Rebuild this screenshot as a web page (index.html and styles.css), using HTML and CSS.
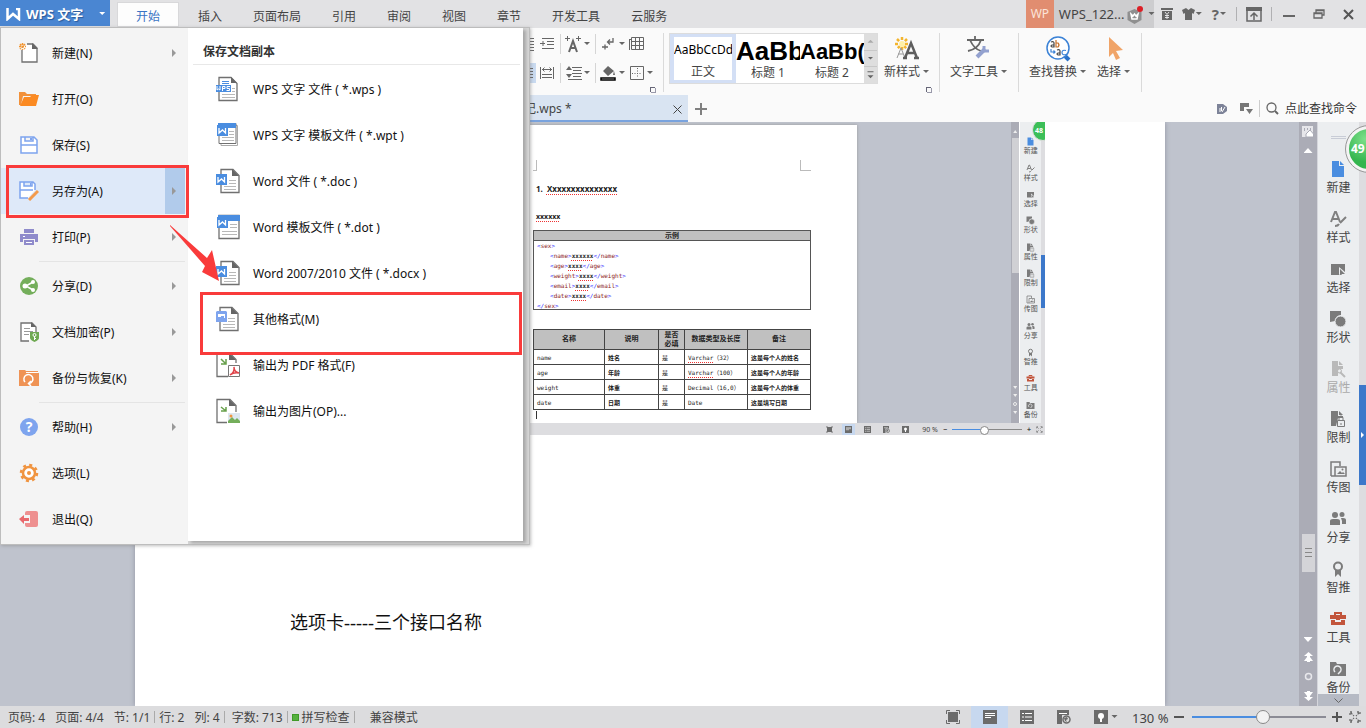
FILE: index.html
```html
<!DOCTYPE html>
<html lang="zh-CN">
<head>
<meta charset="utf-8">
<title>WPS 文字</title>
<link rel="stylesheet" href="styles.css">
</head>
<body>
<svg class="defs" aria-hidden="true">
  <symbol id="page-new" viewBox="0 0 18 18"><path fill="#4a8de0" d="M3 1h7v5h5v11H3z"/><path fill="#4a8de0" d="M11 1l4 4h-4z"/></symbol>
  <symbol id="style" viewBox="0 0 18 18"><path fill="none" stroke="#808080" stroke-width="2" d="M2 12L6 2h1l4 10M4 9h5"/><path fill="none" stroke="#808080" stroke-width="2" d="M17 7l-6 6M6 16q3 0 4-2"/></symbol>
  <symbol id="select" viewBox="0 0 18 18"><path fill="#7b7b7b" d="M2 4h14v11H2z"/><path fill="#eceef0" d="M10 7v8l2-1 1 1h3v-3z"/><path fill="#7b7b7b" d="M11 9l5 5h-3l-2 1z"/></symbol>
  <symbol id="shape" viewBox="0 0 18 18"><path fill="#7b7b7b" d="M1 1h11v4a6 6 0 0 0-6 6l-5 1z"/><circle cx="11.500" cy="11.500" r="5.500" fill="#7b7b7b" stroke="#eceef0"/></symbol>
  <symbol id="prop" viewBox="0 0 18 18"><path fill="#b9b9b9" d="M3 1h6v5h5v3H9v7H3z"/><path fill="#b9b9b9" d="M10 1l4 4h-4z"/><path fill="none" stroke="#b9b9b9" stroke-width="2" d="M11 12l5 5"/><circle cx="10.500" cy="11" r="2" fill="none" stroke="#b9b9b9"/></symbol>
  <symbol id="limit" viewBox="0 0 18 18"><path fill="#7b7b7b" d="M2 1h7v5h5v2H9l-2 8H2z"/><path fill="#7b7b7b" d="M10 1l4 4h-4z"/><path fill="#eceef0" stroke="#7b7b7b" d="M8.500 10.500h7v6h-7z"/><path fill="none" stroke="#7b7b7b" d="M10 10V8q0-2 2-2t2 2v2M12 13v2"/></symbol>
  <symbol id="upload" viewBox="0 0 18 18"><path fill="none" stroke="#7b7b7b" stroke-width="1.500" d="M2 16V2h9v4M2 16h4M6 7h11v9H6z"/><path fill="#7b7b7b" d="M8 14l3-3 2 2 1-1 2 2z"/><circle cx="13.500" cy="9.500" r="1" fill="#7b7b7b"/></symbol>
  <symbol id="share" viewBox="0 0 18 18"><g fill="#7b7b7b"><circle cx="6" cy="5" r="3"/><circle cx="13" cy="4.500" r="2.500"/><path d="M1 15V11q0-2 3-2h4q3 0 3 2v4zM12 8h2q3 0 3 2v4h-4v-3z"/></g></symbol>
  <symbol id="medal" viewBox="0 0 18 18"><circle cx="9" cy="6.500" r="4" fill="none" stroke="#7b7b7b" stroke-width="2"/><path fill="#7b7b7b" d="M6 10h6v7l-3-3-3 3z"/></symbol>
  <symbol id="tools" viewBox="0 0 18 18"><path fill="none" stroke="#c2553c" stroke-width="2" d="M6 5V3h6v2"/><path fill="#c2553c" d="M1 5h16v4h-6v1H7V9H1zM2 10h4v2h6v-2h4v5H2z"/></symbol>
  <symbol id="backup" viewBox="0 0 18 18"><path fill="#7b7b7b" d="M1 2h6l1 2h9v12H1z"/><path fill="none" stroke="#eceef0" stroke-width="1.500" d="M6 12a3.500 3.500 0 1 1 5 0l-2 2"/></symbol>
  <symbol id="wbox" viewBox="0 0 12 12"><path fill="#4a8de0" d="M0 0h11v11H0z"/><path fill="none" stroke="#fff" stroke-width="1.300" d="M2 3v5l3.500-3 3 3V3"/></symbol>
  <symbol id="doc" viewBox="0 0 24 26"><path fill="#fff" stroke="#707070" stroke-width="1.300" d="M5 1.500h12l6 6v17H5z"/><path fill="#666" d="M16 1l7 7h-7z"/><path stroke="#b8b8b8" d="M13 12.500h7M13 15.500h7M8 18.500h12M8 21.500h12"/></symbol>
  <symbol id="view-page" viewBox="0 0 14 14"><path fill="#6b6b6b" d="M0 0h14v14H0z"/><path stroke="#fff" d="M2 3.500h10M2 5.500h10M2 7.500h6"/></symbol>
  <symbol id="view-list" viewBox="0 0 14 14"><path fill="#6b6b6b" d="M0 0h14v14H0z"/><path stroke="#fff" d="M2 3.500h2M5 3.500h7M2 7h2M5 7h7M2 10.500h2M5 10.500h7"/></symbol>
  <symbol id="view-web" viewBox="0 0 14 14"><path fill="#6b6b6b" d="M0 0h12v5H5v9H0z"/><path stroke="#fff" d="M2 3.500h8"/><circle cx="9.500" cy="9.500" r="3.500" fill="#ddd" stroke="#6b6b6b" stroke-width="1.500"/><path fill="#6b6b6b" d="M7 8l3-1 1 2-2 1 1 2-2-1z"/></symbol>
  <symbol id="view-full" viewBox="0 0 14 14"><path fill="#6b6b6b" d="M2 2h10v10H2z"/><path fill="none" stroke="#6b6b6b" d="M.5 4V.5H4M10 .5h3.500V4M.5 10v3.500H4M10 13.500h3.500V10"/></symbol>
  <symbol id="view-bulb" viewBox="0 0 14 14"><path fill="#6b6b6b" d="M0 0h14v14H0z"/><circle cx="7" cy="6" r="3" fill="#fff"/><path fill="#fff" d="M6 8h2v4H6z"/></symbol>
  <symbol id="expand" viewBox="0 0 12 12"><path fill="none" stroke="#6b6b6b" stroke-width="1.300" stroke-dasharray="2 1" d="M1 4V1h3M8 1h3v3M1 8v3h3M8 11h3V8M2 2l3 3M10 2L7 5M2 10l3-3M10 10L7 7"/></symbol>
</svg>

<header class="titlebar">
  <button class="app"><svg width="15" height="13" viewBox="0 0 15 13"><path fill="none" stroke="#fff" stroke-width="2.500" d="M1.500 0v11L7 6l6 5V1H10"/></svg><span>WPS 文字</span><i class="caret light"></i></button>
  <nav class="tabs">
    <button class="tab on">开始</button><button class="tab">插入</button><button class="tab">页面布局</button><button class="tab">引用</button><button class="tab">审阅</button><button class="tab">视图</button><button class="tab">章节</button><button class="tab">开发工具</button><button class="tab">云服务</button>
  </nav>
  <div class="account">
    <span class="wp">WP</span>
    <button class="user">WPS_122...
      <svg width="17" height="19" viewBox="0 0 17 19"><path fill="#8f8f8f" d="M7.500 4l7 3v8l-7 4-7-4V7z"/><path fill="none" stroke="#fff" stroke-width="1.500" d="M4 9l2 2 1.500-2L9 11l2-2-1 5H5z"/><circle cx="13" cy="4" r="3" fill="#dc1f26"/></svg>
      <i class="caret"></i></button>
  </div>
  <div class="winctl">
    <button aria-label="稻壳"><svg width="12" height="12" viewBox="0 0 12 12"><path fill="#666" d="M0 0h12v2H0zM1 3h10v9H1z"/><path fill="none" stroke="#e3e3e5" d="M4 4l2 2.500L8 4M4 7.500h4M4 9.500h4M6 7v4"/></svg></button>
    <button aria-label="皮肤" class="with-caret"><svg width="13" height="12" viewBox="0 0 13 12"><path fill="#666" d="M4 0l2.500 2L9 0l4 2-1.500 4-1.500-1v7H3V5L1.500 6 0 2z"/></svg><i class="caret"></i></button>
    <button aria-label="帮助" class="with-caret help">?<i class="caret"></i></button>
    <i class="bar"></i>
    <button aria-label="收起功能区"><svg width="16" height="15" viewBox="0 0 16 15"><path fill="none" stroke="#666" stroke-width="1.500" d="M1 1h14v13H1z"/><path fill="#666" d="M0 0h16v4H0z"/><path fill="none" stroke="#666" stroke-width="1.500" d="M8 13V6M4.500 9.500L8 6l3.500 3.500"/></svg></button>
    <i class="bar"></i>
    <button aria-label="最小化" class="wide"><svg width="12" height="12" viewBox="0 0 12 12"><path fill="#666" d="M0 7h12v2H0z"/></svg></button>
    <button aria-label="还原" class="wide"><svg width="12" height="10" viewBox="0 0 12 10"><path fill="none" stroke="#666" stroke-width="1.300" d="M3 4V1h8v5H9M1 4h8v5H1zM3 1.500h8M1 4.500h8"/></svg></button>
    <button aria-label="关闭" class="wide"><svg width="11" height="11" viewBox="0 0 11 11"><path stroke="#555" stroke-width="2" d="M1 1l9 9M10 1l-9 9"/></svg></button>
  </div>
</header>

<section class="ribbon">
  <div class="para">
    <div class="tools">
      <button class="ic half" aria-label="减少缩进"><svg width="12" height="16" viewBox="0 0 12 16"><path stroke="#666" d="M0 2.500h10M0 5.500h10M0 8.500h10M0 11.500h10M0 14.500h10"/></svg></button>
      <button class="ic" aria-label="增加缩进"><svg width="16" height="16" viewBox="0 0 16 16"><path stroke="#666" d="M3 2.500h12M8 5.500h7M8 8.500h7M3 12.500h12M1 7.500h5M4 5v5"/></svg></button>
      <i class="sep"></i>
      <button class="ic" aria-label="文字效果"><svg width="18" height="18" viewBox="0 0 18 18"><path fill="none" stroke="#666" stroke-width="2" d="M4 17l4-11 4 11M5.500 13h5"/><path fill="none" stroke="#666" d="M0 3.500h5M2.500 1v5M11 3.500h5M13.500 1v5"/></svg></button><i class="caret"></i>
      <i class="sep"></i>
      <button class="ic" aria-label="换行"><svg width="16" height="16" viewBox="0 0 16 16"><path fill="none" stroke="#666" stroke-width="1.300" d="M12 2v4H7M9 3.500L6.500 6 9 8.500M1 11h6M4 8.500v5"/></svg></button><i class="caret"></i>
      <button class="ic push" aria-label="表格"><svg width="16" height="16" viewBox="0 0 16 16"><path fill="none" stroke="#666" d="M2.500 1.500h12v12h-12zM2 5.500h13M2 9.500h13M6.500 1v13M10.500 1v13M0 3.500h2M.5 4v10"/></svg></button>
    </div>
    <div class="tools">
      <button class="ic half on" aria-label="两端对齐"><svg width="12" height="16" viewBox="0 0 12 16"><path stroke="#666" d="M0 3.500h9M0 6.500h9M0 9.500h9M0 12.500h9"/></svg></button>
      <button class="ic" aria-label="分散对齐"><svg width="16" height="16" viewBox="0 0 16 16"><path fill="none" stroke="#666" d="M1.500 2v12M14.500 2v12M3 4.500h10M5.500 2.500l-2 2 2 2M10.500 2.500l2 2-2 2M3 9.500h10M3 12.500h10"/></svg></button>
      <i class="sep"></i>
      <button class="ic" aria-label="行距"><svg width="16" height="16" viewBox="0 0 16 16"><path stroke="#666" d="M6 2.500h10M7 5.500h8M6 8.500h10M7 11.500h8M2 14.500h14"/><path fill="#666" d="M3 1l3 4H0zM3 13l3-4H0z"/></svg></button><i class="caret"></i>
      <i class="sep"></i>
      <button class="ic" aria-label="底纹"><svg width="18" height="18" viewBox="0 0 18 18"><path fill="#666" d="M3 7l5-5 6 5-6 5zM14 7l1 4-2 0z"/><path fill="#fff" stroke="#000" stroke-width="1.500" d="M1 14h14v2H1z"/></svg></button><i class="caret"></i>
      <button class="ic push" aria-label="边框"><svg width="14" height="14" viewBox="0 0 14 14"><path fill="none" stroke="#666" d="M.5.500h13v13H.5z"/><path fill="none" stroke="#666" stroke-dasharray="1 1.500" d="M7.500 2v10M2 7.500h10"/></svg></button><i class="caret"></i>
    </div>
    <button class="launch" aria-label="段落设置"></button>
  </div>
  <div class="stylegroup">
    <div class="gallery">
      <button class="st on"><b class="s0">AaBbCcDd</b><span>正文</span></button>
      <button class="st"><b class="s1">AaBb</b><span>标题 1</span></button>
      <button class="st"><b class="s2">AaBb(</b><span>标题 2</span></button>
      <div class="gscroll"><button aria-label="上一行"><i class="caret up"></i></button><button aria-label="下一行"><i class="caret"></i></button><button aria-label="更多"><i class="caret more"></i></button></div>
    </div>
    <button class="big"><svg width="26" height="26" viewBox="0 0 26 26"><path stroke="#f3b52e" stroke-width="2.500" stroke-dasharray="3 2" d="M8 1v13M1 8h14M3 3l10 10M13 3L3 13"/><circle cx="8" cy="8" r="3" fill="#fff0a8"/><path fill="none" stroke="#999" d="M3 22l4-10 4 10M4 18h5"/><path fill="none" stroke="#5e5e5e" stroke-width="2.500" d="M11 22l6-15 6 15M13 17h8M9 22h4M20 22h5"/></svg><span>新样式<i class="caret"></i></span></button>
    <button class="launch" aria-label="样式设置"></button>
  </div>
  <div class="grp"><button class="big"><svg width="26" height="26" viewBox="0 0 26 26"><path fill="none" stroke="#666" stroke-width="1.800" d="M1 4h17M9 0v3M4 4q4 9 11 11M15 4q-3 9-13 11"/><path stroke="#93a1cf" stroke-width="4" d="M11 21l8-8"/><path fill="none" stroke="#93a1cf" stroke-width="3" d="M18 10v5h5"/></svg><span>文字工具<i class="caret"></i></span></button></div>
  <div class="grp"><button class="big"><svg width="26" height="26" viewBox="0 0 26 26"><path stroke="#2b72c8" stroke-width="4" d="M20 20l4 4"/><circle cx="13" cy="12" r="11" fill="#fff" stroke="#3b82d6" stroke-width="1.500"/><path fill="none" stroke="#444" stroke-width="1.200" d="M6 6q3-1 3 1v4H7q-2-1 0-2h2M12 14q3-1 3 1v4h-2q-2-1 0-2h2"/><path fill="none" stroke="#c8702a" stroke-width="1.200" d="M11 4v7h2q2-2 0-4h-2"/><path fill="none" stroke="#3b82d6" stroke-width="1.200" d="M21 14.500q-4-1-4 2t4 2M6 13v3h4M8.500 14.500L10 16l-1.500 1.500"/></svg><span>查找替换<i class="caret"></i></span></button>
  <button class="big"><svg width="26" height="26" viewBox="0 0 26 26"><path fill="#f0a468" d="M8 1l14 13-7 1 4 7-4 2-3-7-4 4z"/></svg><span>选择<i class="caret"></i></span></button></div>
</section>

<div class="doctabs">
  <div class="doctab"><span>笔记.wps *</span><button aria-label="关闭标签"><svg width="9" height="9" viewBox="0 0 9 9"><path stroke="#444" d="M.5.500l8 8M8.500.500l-8 8"/></svg></button></div>
  <button class="plus" aria-label="新建标签"><svg width="12" height="12" viewBox="0 0 12 12"><path stroke="#808080" stroke-width="2" d="M6 0v12M0 6h12"/></svg></button>
  <div class="cmd">
    <svg width="10" height="10" viewBox="0 0 10 10"><path fill="#7d8398" d="M0 0h6l4 3v4l-4 3H0z"/><path stroke="#fff" d="M3 8V4M5 8l3-5M4.500 7V3"/></svg>
    <svg width="13" height="11" viewBox="0 0 13 11"><path fill="#777" d="M0 0h9v4H4v4H0zM6 6h7l-3.500 5z"/></svg>
    <i></i>
    <svg width="13" height="13" viewBox="0 0 13 13"><circle cx="5.500" cy="5.500" r="4.500" fill="none" stroke="#666" stroke-width="1.300"/><path stroke="#666" stroke-width="2" d="M9 9l3 3"/></svg>
    <a href="#">点此查找命令</a>
  </div>
</div>

<main class="work">
  <div class="canvas">
    <article class="paper">
      <div class="shot">
        <div class="shot-body">
          <div class="shot-canvas">
            <div class="shot-page">
              <div class="corners"><i></i><i></i></div>
              <h3>1.&nbsp;&nbsp;<u>Xxxxxxxxxxxxxxx</u></h3>
              <h4><u>xxxxxx</u></h4>
              <div class="example">
                <div class="ex-head">示例</div>
                <div class="code"><p>&lt;<s>sex</s>&gt;</p><p class="in">&lt;<s>name</s>&gt;<u>xxxxxx</u>&lt;/<s>name</s>&gt;</p><p class="in">&lt;<s>age</s>&gt;<u>xxxx</u>&lt;/<s>age</s>&gt;</p><p class="in">&lt;<s>weight</s>&gt;<u>xxxx</u>&lt;/<s>weight</s>&gt;</p><p class="in">&lt;<s>email</s>&gt;<u>xxxx</u>&lt;/<s>email</s>&gt;</p><p class="in">&lt;<s>date</s>&gt;<u>xxxx</u>&lt;/<s>date</s>&gt;</p><p>&lt;/<s>sex</s>&gt;</p></div>
              </div>
              <table>
                <colgroup><col class="c1"><col class="c2"><col class="c3"><col class="c4"><col class="c4"></colgroup>
                <tr><th>名称</th><th>说明</th><th>是否<br>必填</th><th>数据类型及长度</th><th>备注</th></tr>
                <tr><td>name</td><td class="b">姓名</td><td>是</td><td><u>Varchar</u>（32）</td><td class="b">这是每个人的姓名</td></tr>
                <tr><td>age</td><td class="b">年龄</td><td>是</td><td><u>Varchar</u>（100）</td><td class="b">这是每个人的年龄</td></tr>
                <tr><td>weight</td><td class="b">体重</td><td>是</td><td>Decimal（16,0）</td><td class="b">这是每个人的体重</td></tr>
                <tr><td>date</td><td class="b">日期</td><td>是</td><td>Date</td><td class="b">这是填写日期</td></tr>
              </table>
              <i class="cursor"></i>
            </div>
          </div>
          <div class="mini-scroll"><i class="tri up"></i><i class="mthumb"></i><i class="tri"></i><i class="tri"></i><i class="dot"></i><i class="tri"></i></div>
          <div class="mini-side">
            <div class="mi"><svg><use href="#page-new"/></svg>新建</div><div class="mi"><svg><use href="#style"/></svg>样式</div><div class="mi"><svg><use href="#select"/></svg>选择</div><div class="mi"><svg><use href="#shape"/></svg>形状</div><div class="mi"><svg><use href="#limit"/></svg>属性</div><div class="mi"><svg><use href="#limit"/></svg>限制</div><div class="mi"><svg><use href="#upload"/></svg>传图</div><div class="mi"><svg><use href="#share"/></svg>分享</div><div class="mi"><svg><use href="#medal"/></svg>智推</div><div class="mi"><svg><use href="#tools"/></svg>工具</div><div class="mi"><svg><use href="#backup"/></svg>备份</div>
          </div>
          <div class="mini-edge"><i></i></div>
          <span class="mini-ball">48</span>
        </div>
        <div class="shot-status">
          <div class="mini-views"><svg><use href="#view-full"/></svg><span class="hl"><svg><use href="#view-page"/></svg></span><svg><use href="#view-list"/></svg><svg><use href="#view-web"/></svg><svg><use href="#view-bulb"/></svg></div>
          <span>90 %</span><b>−</b><span class="mini-range"></span><b>+</b><svg><use href="#expand"/></svg>
        </div>
      </div>
      <p class="textline">选项卡-----三个接口名称</p>
    </article>
  </div>
  <div class="vscroll">
    <svg width="12" height="12" viewBox="0 0 12 12"><path fill="#e6e6ea" d="M0 0h11v11H0z"/><path fill="#a9aab5" d="M2 2h1v3H2zM5 2h1v2H5zM8 2h1v2H8z"/><path fill="#fff" stroke="#a9aab5" d="M4 11V8l4-4 3.500 4v3z"/></svg>
    <i class="tri up"></i>
    <div class="track"><i class="before"></i><i class="thumb"></i><i class="after"></i></div>
    <i class="tri"></i>
    <svg width="9" height="10" viewBox="0 0 9 10"><path fill="#fff" d="M4.500 0L9 4H6v1l3 4H6v1H3V9H0l3-4V4H0z"/></svg>
    <svg width="9" height="9" viewBox="0 0 9 9"><circle cx="4.500" cy="4.500" r="3" fill="none" stroke="#e8e8ec" stroke-width="1.500"/></svg>
    <svg width="9" height="10" viewBox="0 0 9 10"><path fill="#fff" d="M4.500 10L9 6H6V5l3-4H6V0H3v1H0l3 4v1H0z"/></svg>
  </div>
  <aside class="side">
    <div class="side-list">
      <i class="grip"></i>
      <button><svg><use href="#page-new"/></svg>新建</button>
      <button><svg><use href="#style"/></svg>样式</button>
      <button><svg><use href="#select"/></svg>选择</button>
      <button><svg><use href="#shape"/></svg>形状</button>
      <button class="off"><svg><use href="#prop"/></svg>属性</button>
      <button><svg><use href="#limit"/></svg>限制</button>
      <button><svg><use href="#upload"/></svg>传图</button>
      <button><svg><use href="#share"/></svg>分享</button>
      <button><svg><use href="#medal"/></svg>智推</button>
      <button><svg><use href="#tools"/></svg>工具</button>
      <button><svg><use href="#backup"/></svg>备份</button>
    </div>
    <button class="side-more" aria-label="更多"><svg width="9" height="5" viewBox="0 0 9 5"><path fill="none" stroke="#666" d="M.5.500l4 4 4-4"/></svg></button>
  </aside>
  <div class="edge"><button aria-label="展开侧栏"></button></div>
  <span class="ball">49</span>
</main>

<footer class="status">
  <span>页码: 4</span><span class="g9">页面: 4/4</span><span class="g9">节: 1/1</span><i></i><span>行: 2</span><span class="g9">列: 4</span><i></i><span class="g9 near">字数: 713</span><i></i><em></em><span>拼写检查</span><i></i><span class="g14">兼容模式</span>
  <div class="views">
    <button aria-label="全屏显示"><svg><use href="#view-full"/></svg></button>
    <button aria-label="页面视图" class="on"><svg><use href="#view-page"/></svg></button>
    <button aria-label="大纲"><svg><use href="#view-list"/></svg></button>
    <button aria-label="Web 版式"><svg><use href="#view-web"/></svg></button>
    <button aria-label="护眼模式"><svg><use href="#view-bulb"/></svg><i class="caret"></i></button>
  </div>
  <label for="zoom">130 %</label>
  <button class="zb" aria-label="缩小"><svg width="10" height="10" viewBox="0 0 10 10"><path stroke="#555" stroke-width="2" d="M0 5h10"/></svg></button>
  <input type="range" id="zoom" min="0" max="100" value="53">
  <button class="zb" aria-label="放大"><svg width="10" height="10" viewBox="0 0 10 10"><path stroke="#555" stroke-width="2" d="M0 5h10M5 0v10"/></svg></button>
  <button class="zb fit" aria-label="适应窗口"><svg width="12" height="12"><use href="#expand"/></svg></button>
</footer>

<div class="menu">
  <div class="menu-main">
    <button class="mrow"><svg viewBox="0 0 20 20"><path fill="#fff" stroke="#707070" stroke-width="1.300" d="M3 7V19h15V5l-4-4H8"/><path fill="#666" d="M13 0l6 6h-6z"/><path stroke="#f2942f" stroke-width="1.500" stroke-dasharray="2 1" d="M3.500 0v7M0 3.500h7M1 1l5 5M6 1L1 6"/></svg><span>新建(N)</span><i></i></button>
    <button class="mrow"><svg viewBox="0 0 20 20"><path fill="#f2913a" d="M0 3h6l2 2h9v2H4L2 16H0z"/><path fill="#fb8a22" d="M5 8h6l2-2h7l-3 11H1z"/></svg><span>打开(O)</span></button>
    <button class="mrow"><svg viewBox="0 0 20 20"><path fill="#fff" stroke="#7ea4ee" stroke-width="1.500" d="M2 2h13l3 3v13H2zM2 10h16M6 2v4h8V2"/><path fill="#7ea4ee" d="M11 3h2v2h-2z"/></svg><span>保存(S)</span></button>
    <button class="mrow on"><svg viewBox="0 0 20 20"><path fill="#fff" stroke="#7ea4ee" stroke-width="1.500" d="M9 17H1V1h13l2 2v6M1 9h13M5 1v4h8V1"/><path fill="#7ea4ee" d="M11 2h1v3h-1z"/><path stroke="#f39a4c" stroke-width="3" d="M10 19l9-9"/></svg><span>另存为(A)</span><i></i></button>
    <button class="mrow"><svg viewBox="0 0 20 20"><path fill="#8f8bcb" d="M5 2h10v4H5zM1 7h18v8h-3v-3H4v3H1zM5 13h10v5H5z"/><path stroke="#fff" d="M7 15.500h6M4 9.500h2"/></svg><span>打印(P)</span><i></i></button>
    <hr>
    <button class="mrow"><svg viewBox="0 0 20 20"><circle cx="10" cy="10" r="9" fill="#74ae5b"/><path fill="none" stroke="#fff" stroke-width="1.500" d="M14 6l-7 4 7 4"/><g fill="#fff"><circle cx="14" cy="6" r="2"/><circle cx="6" cy="10" r="2.500"/><circle cx="14" cy="14" r="2"/></g></svg><span>分享(D)</span><i></i></button>
    <button class="mrow"><svg viewBox="0 0 20 20"><path fill="#fff" stroke="#707070" stroke-width="1.300" d="M10 19H2V1h11l4 4v5"/><path fill="#666" d="M12 0l5 5h-5z"/><path stroke="#999" d="M5 6.500h6M5 9.500h9M5 12.500h5"/><path fill="#6fa952" d="M11 10h9v6q0 2-4.500 4Q11 18 11 16z"/><circle cx="15.500" cy="13" r="1.500" fill="none" stroke="#fff"/><path stroke="#fff" d="M15.500 14v4M15 16.500h2"/></svg><span>文档加密(P)</span><i></i></button>
    <button class="mrow"><svg viewBox="0 0 20 20"><path fill="#ef9355" d="M0 2h6l1 1h12v2h1v13H0z"/><path fill="none" stroke="#fff" stroke-width="1.500" d="M6 14a4.500 4.500 0 1 1 4 1.500M12 13l-2.500 2.500L12 18"/><path stroke="#fff" d="M7 4.500h12"/></svg><span>备份与恢复(K)</span><i></i></button>
    <hr>
    <button class="mrow"><svg viewBox="0 0 20 20"><circle cx="10" cy="10" r="9" fill="#7ea4ee"/><text x="10" y="15" class="q">?</text></svg><span>帮助(H)</span><i></i></button>
    <button class="mrow"><svg viewBox="0 0 20 20"><circle cx="10" cy="10" r="8" fill="none" stroke="#f09440" stroke-width="2.500" stroke-dasharray="3 3.280"/><circle cx="10" cy="10" r="6" fill="#fff" stroke="#f09440" stroke-width="2.500"/><circle cx="10" cy="10" r="2" fill="#f09440"/></svg><span>选项(L)</span></button>
    <button class="mrow"><svg viewBox="0 0 20 20"><path fill="#ee9090" d="M6 4q0-2 2-2h9q2 0 2 2v12q0 2-2 2H8q-2 0-2-2v-2h5V6H6z"/><path fill="#e8686c" d="M0 10l5-4v3h5v3H5v3z"/></svg><span>退出(Q)</span></button>
  </div>
  <div class="menu-sub">
    <h2>保存文档副本</h2>
    <button class="srow"><svg viewBox="0 0 24 26"><path fill="#fff" stroke="#707070" stroke-width="1.300" d="M3 1.500h12l6 6v17H3z"/><path fill="#666" d="M15 1l6 6h-6z"/><path stroke="#4a8de0" d="M6 5.500h7M6 7.500h7"/><path fill="#4a8de0" d="M0 9h15v7H0z"/><path fill="none" stroke="#fff" d="M1 10v4l1.500-1L4 14v-4M6.500 15v-4.500H9v2H7M14 10.500h-3v2h2.500v2H10.500"/><path stroke="#b8b8b8" d="M16 12.500h3M16 15.500h3M6 18.500h13M6 21.500h13"/></svg><span>WPS 文字 文件 ( *.wps )</span></button>
    <button class="srow"><svg viewBox="0 0 24 26"><path fill="#fff" stroke="#aaa" d="M5 3.500h16.500v20H5z"/><path fill="#fff" stroke="#707070" d="M3 1.500h17v20H3z"/><path fill="#4a8de0" d="M2 1h18v5H2z"/><path stroke="#b8b8b8" d="M13 9.500h5M13 12.500h5M6 15.500h12M6 18.500h12"/><use href="#wbox" x="1" y="3" width="12" height="12"/></svg><span>WPS 文字 模板文件 ( *.wpt )</span></button>
    <button class="srow"><svg viewBox="0 0 24 26"><use href="#doc" width="24" height="26"/><use href="#wbox" x="0" y="6" width="12" height="12"/></svg><span>Word 文件 ( *.doc )</span></button>
    <button class="srow"><svg viewBox="0 0 24 26"><path fill="#fff" stroke="#707070" stroke-width="1.300" d="M3 1.500h20v23H3z"/><path fill="#4a8de0" d="M2 1h22v6H2z"/><path stroke="#b8b8b8" d="M14 10.500h7M14 13.500h7M6 17.500h15M6 20.500h15"/><use href="#wbox" x="1" y="3" width="12" height="12"/></svg><span>Word 模板文件 ( *.dot )</span></button>
    <button class="srow"><svg viewBox="0 0 24 26"><use href="#doc" width="24" height="26"/><use href="#wbox" x="0" y="6" width="12" height="12"/></svg><span>Word 2007/2010 文件 ( *.docx )</span></button>
    <button class="srow"><svg viewBox="0 0 24 26"><use href="#doc" x="-1" width="24" height="26"/><path fill="#7ea4ee" d="M1 5h9l1 1v10H0V6z"/><path fill="#fff" d="M2 8h7v4H8v-2H5v1H2z"/></svg><span>其他格式(M)</span></button>
    <button class="srow"><svg viewBox="0 0 24 26"><path fill="#fff" stroke="#707070" stroke-width="1.300" d="M12 24.500H1v-23h13l6 6V11"/><path fill="#666" d="M13 1l7 7h-7z"/><path fill="none" stroke="#68a04c" stroke-width="1.500" d="M5 7l5 5M10 7v5H5"/><path fill="#fff" stroke="#777" d="M12.500 13.500h11v11h-11z"/><path fill="none" stroke="#e0454b" stroke-width="1.500" d="M14 23q5-3 4-8 0 5 5 6-5-1-9 2"/></svg><span>输出为 PDF 格式(F)</span></button>
    <button class="srow"><svg viewBox="0 0 24 26"><path fill="#fff" stroke="#707070" stroke-width="1.300" d="M11 24.500H1v-23h13l6 6V14"/><path fill="#666" d="M13 1l7 7h-7z"/><path fill="none" stroke="#68a04c" stroke-width="1.500" d="M5 9l5 4M10 9v4H5"/><path fill="#dde7f1" d="M12 15h12v10H12z"/><path fill="#74ae5b" d="M12 25v-2l4-4 3 3 2-2 3 3v2z"/><circle cx="15" cy="18" r="1.500" fill="#f09440"/></svg><span>输出为图片(OP)...</span></button>
  </div>
  <i class="mark m1"></i><i class="mark m2"></i>
  <svg class="arrow" width="52" height="58" viewBox="0 0 52 58"><path fill="#f93b3b" d="M0 0L37 33l5-8 7 31-17-9 3-6L0 1z"/></svg>
</div>
</body>
</html>
```
FILE: styles.css
```css
* { box-sizing: border-box; }
body {
  margin: 0; height: 100vh; min-height: 600px; overflow: hidden; position: relative;
  display: flex; flex-direction: column;
  font: 12px/16px "Noto Sans", "Noto Sans CJK SC", sans-serif; color: #444; background: #fafafa;
}
button { border: 0; padding: 0; margin: 0; background: none; font: inherit; color: inherit; }
i, em { font-style: normal; }
h2, h3, h4, p { margin: 0; }
svg { display: block; flex: none; }
.defs { position: absolute; width: 0; height: 0; }
.caret { display: block; width: 8px; height: 4px; flex: none; background: #666; clip-path: polygon(1px 0, 7px 0, 4px 3px); }
.caret.light { background: #fff; }
.caret.up { background: #aaa; clip-path: polygon(4px 0, 7px 3px, 1px 3px); }
.caret.more { height: 8px; clip-path: polygon(1px 0, 7px 0, 7px 1px, 1px 1px, 1px 4px, 7px 4px, 4px 7px, 1px 4px, 1px 0); }

/* title bar */
.titlebar { height: 28px; flex: none; display: flex; background: #e2e2e4; }
.app { width: 110px; height: 26px; display: flex; align-items: center; gap: 5px; padding: 2px 0 0 6px; background: #4a86d2; color: #fff; font-size: 13px; font-weight: bold; white-space: nowrap; text-shadow: 1px 1px 1px #2a5a9a; }
.app .caret { margin-left: 10px; }
.tabs { display: flex; gap: 1px; padding: 3px 0 2px 8px; flex: 1; }
.tab { padding: 5px 15px 0; color: #444; white-space: nowrap; }
.tab.on { padding: 5px 18px 0; margin-right: 4px; background: #fdfdfd; color: #3a74c4; outline: 1px solid #d8d8da; }
.account { display: flex; }
.wp { width: 28px; line-height: 28px; text-align: center; background: #e18d70; color: #fbe4da; }
.user { width: 100px; display: flex; align-items: center; gap: 3px; padding-left: 5px; background: #cdcdcf; font-size: 13px; }
.winctl { display: flex; align-items: center; gap: 9px; padding: 0 10px 0 7px; }
.with-caret { display: flex; align-items: center; }
.help { font-size: 15px; font-weight: bold; color: #666; }
.bar { width: 1px; height: 14px; background: #b0b0b2; }
.winctl .wide { padding: 0 2px; }
.winctl .wide + .wide { margin-left: 5px; }

/* ribbon */
.ribbon { height: 67px; flex: none; display: flex; padding: 5px 0 3px 524px; background: #fafafa; }
.para { width: 140px; padding: 1px 0 3px; border-right: 1px solid #dadada; display: flex; flex-direction: column; gap: 9px; position: relative; }
.tools { display: flex; align-items: center; height: 20px; }
.tools .sep { width: 1px; height: 20px; margin: 0 4px; background: #d5d5d5; }
.ic { width: 18px; height: 20px; display: flex; align-items: center; justify-content: center; }
.ic.half { width: 12px; margin-right: 2px; }
.ic.on { background: #c9daf0; }
.ic.push { margin-left: 2px; }
.launch { position: absolute; right: 8px; bottom: 0; width: 5px; height: 5px; border: solid #667; border-width: 1px 0 0 1px; box-shadow: 1px 1px 0 #99a; }
.stylegroup { display: flex; padding: 0 9px 0 5px; border-right: 1px solid #dadada; position: relative; }
.gallery { display: flex; height: 51px; border: 1px solid #dcdcdc; background: #fff; }
.st { width: 64px; display: flex; flex-direction: column; align-items: center; overflow: hidden; white-space: nowrap; }
.st.on { width: 66px; border: 4px solid #d3dff5; border-width: 3px 4px; }
.st b { height: 31px; color: #000; line-height: 35px; align-self: flex-start; }
.st.on b { height: 28px; line-height: 26px; }
.st .s0 { font-weight: normal; }
.st .s1 { font-family: "Liberation Sans", sans-serif; font-size: 26px; }
.st .s2 { font-family: "Liberation Sans", sans-serif; font-size: 22px; }
.gscroll { width: 13px; display: flex; flex-direction: column; gap: 1px; background: #c8c8c8; }
.gscroll button { flex: 1; background: #dedede; display: flex; align-items: center; justify-content: center; }
.big { display: flex; flex-direction: column; align-items: center; gap: 2px; padding-top: 3px; white-space: nowrap; }
.big span { display: flex; align-items: center; gap: 2px; }
.stylegroup .big { margin-left: 6px; }
.grp { display: flex; gap: 10px; padding: 0 10px; border-right: 1px solid #dadada; }

/* document tabs */
.doctabs { height: 27px; flex: none; display: flex; align-items: center; }
.doctab { width: 553px; margin-left: 135px; align-self: stretch; display: flex; align-items: center; justify-content: space-between; padding: 3px 6px 0 377px; background: #d9e4f2; border-bottom: 2px solid #79a3de; }
.plus { padding: 0 7px; }
.cmd { margin-left: auto; display: flex; align-items: center; gap: 6px; padding-right: 9px; }
.cmd svg:nth-child(2) { margin-left: 7px; }
.cmd i { width: 1px; height: 17px; background: #ccc; }
.cmd a { color: #333; text-decoration: none; }

/* workspace */
.work { flex: 1; min-height: 0; display: flex; position: relative; overflow: hidden; }
.canvas { flex: 1; min-width: 0; overflow: hidden; padding: 0 134px 0 135px; background: #bfc3cd; }
.paper { min-height: 100%; padding: 0 120px 0 155px; background: #fff; box-shadow: 0 0 5px #8f93a0; }
.textline { margin-top: 176px; font: 18px/24px "Liberation Serif", "Noto Sans CJK SC", serif; color: #111; }
.vscroll { width: 19px; display: flex; flex-direction: column; align-items: center; gap: 10px; padding: 4px 0 5px; background: #abacb6; border-right: 1px solid #d5d6dc; }
.vscroll .tri { width: 9px; height: 5px; background: #fff; clip-path: polygon(0 0, 100% 0, 50% 100%); }
.vscroll .tri.up { clip-path: polygon(50% 0, 100% 100%, 0 100%); }
.track { flex: 1; display: flex; flex-direction: column; }
.track .before { flex: 375; }
.track .after { flex: 56; }
.thumb { width: 13px; height: 38px; background: linear-gradient(#888, #888) 50% 14px / 7px 1px no-repeat, linear-gradient(#888, #888) 50% 18px / 7px 1px no-repeat, linear-gradient(#888, #888) 50% 22px / 7px 1px no-repeat, #d4d4d8; }
.side { width: 41px; display: flex; flex-direction: column; background: #eceef0; }
.side-list { flex: 1; min-height: 0; overflow: hidden; display: flex; flex-direction: column; align-items: center; }
.grip { flex: none; width: 15px; height: 3px; margin: 14px 0 17px; border: solid #c8ccd6; border-width: 1px 0; }
.side-list button { flex: none; height: 50px; padding-top: 4px; display: flex; flex-direction: column; align-items: center; gap: 1px; line-height: 18px; }
.side-list svg { width: 18px; height: 18px; }
.side-list .off { color: #aaa; }
.side-more { height: 12px; display: flex; align-items: center; justify-content: center; background: #b6bac4; }
.edge { width: 7px; background: #dddde0; display: flex; align-items: center; }
.edge button { width: 7px; height: 100px; margin-top: 42px; background: #3c78ca; position: relative; }
.edge button::after { content: ""; position: absolute; left: 2px; top: 47px; border: 3px solid transparent; border-left: 3px solid #fff; border-right: 0; }
.ball { position: absolute; right: -26px; top: 4px; width: 46px; height: 46px; padding-left: 2px; border: 3px solid #f4f4f4; border-radius: 50%; outline: 1px solid #999; background: radial-gradient(circle at 40% 25%, #7de08a, #34b54e 60%); color: #fff; font-size: 12px; font-weight: bold; line-height: 39px; }

/* screenshot placed in the document */
.shot { height: 313px; display: flex; flex-direction: column; font-size: 7px; line-height: 9px; }
.shot-body { flex: 1; min-height: 0; display: flex; overflow: hidden; position: relative; }
.shot-canvas { flex: 1; background: #bfc3cd; padding: 3px 154px 0 0; }
.shot-page { height: 100%; padding: 35px 46px 0 243px; background: #fff; box-shadow: 0 0 3px #999; }
.corners { display: flex; justify-content: space-between; }
.corners i { width: 11px; height: 11px; border: solid #bbb; border-width: 0 0 1px 1px; }
.corners i:first-child { border-width: 0 1px 1px 0; width: 4px; }
.shot h3 { font-size: 8px; line-height: 10px; margin: 13px 0 0 3px; color: #222; }
.shot h4 { font-size: 7px; line-height: 10px; margin: 18px 0 8px 3px; color: #222; }
.shot u { text-decoration: underline dotted #e33 1px; text-underline-offset: 2px; color: #222; }
.shot s { text-decoration: none; color: #8b1a1a; }
.example { border: 1px solid #555; height: 80px; }
.ex-head { text-align: center; background: #c0c0c0; border-bottom: 1px solid #555; font-weight: bold; color: #222; height: 10px; }
.code { padding: 0 3px; font: 6px/10px "DejaVu Sans Mono", monospace; color: #22f; }
.code .in { padding-left: 13px; }
.code u { font-weight: bold; }
.shot table { width: 100%; margin-top: 19px; table-layout: fixed; border-collapse: collapse; color: #222; }
.c1 { width: 71px; } .c2 { width: 54px; } .c3 { width: 26px; } .c4 { width: 63px; }
.shot th, .shot td { border: 1px solid #444; padding: 0 3px; height: 15px; white-space: nowrap; overflow: hidden; font: 6px/9px "DejaVu Sans Mono", "Noto Sans CJK SC", monospace; }
.shot th { background: #c0c0c0; height: 20px; font-size: 7px; font-weight: bold; padding: 0; }
.shot .b { font-weight: bold; }
.cursor { display: block; width: 1px; height: 8px; margin: 1px 0 0 3px; background: #333; }
.mini-scroll { width: 9px; display: flex; flex-direction: column; align-items: center; gap: 5px; padding-top: 8px; background: #abacb6; }
.mini-scroll .tri { width: 4px; height: 3px; background: #eee; clip-path: polygon(0 0, 100% 0, 50% 100%); }
.mini-scroll .tri.up { clip-path: polygon(50% 0, 100% 100%, 0 100%); }
.mthumb { width: 7px; height: 135px; margin-bottom: 108px; background: #d0d0d4; }
.mini-scroll .dot { width: 4px; height: 4px; border: 1px solid #eee; border-radius: 50%; }
.mini-side { width: 22px; margin-left: 1px; padding-top: 11px; display: grid; grid-auto-rows: 1fr; background: #eceef0; }
.mi { display: flex; flex-direction: column; align-items: center; justify-content: center; color: #555; min-height: 0; }
.mi svg { width: 9px; height: 9px; }
.mini-edge { width: 4px; background: #dddde0; display: flex; align-items: center; }
.mini-edge i { width: 4px; height: 53px; margin-top: 17px; background: #3c78ca; }
.mini-ball { position: absolute; right: -9px; top: -3px; width: 22px; height: 22px; padding-left: 2px; border: 1px solid #ddd; border-radius: 50%; background: #3cbf58; color: #fff; font-weight: bold; line-height: 22px; }
.shot-status { height: 12px; display: flex; align-items: center; justify-content: flex-end; gap: 5px; padding-right: 2px; background: #dddde0; }
.shot-status svg { width: 7px; height: 7px; }
.mini-views { display: flex; align-items: center; gap: 12px; margin-right: 8px; }
.shot-status .hl { background: #c7d8ef; padding: 2px 3px; margin: 0 -3px; }
.mini-range { width: 70px; height: 1px; background: linear-gradient(90deg, #4a8de0 45%, #888 45%); position: relative; }
.mini-range::after { content: ""; position: absolute; left: 28px; top: -3px; width: 7px; height: 7px; border: 1px solid #888; border-radius: 50%; background: #fff; }

/* status bar */
.status { height: 22px; flex: none; display: flex; align-items: center; gap: 4px; padding: 0 5px 0 8px; background: #dcdcde; white-space: nowrap; }
.status > span, .status label { padding-top: 1px; }
.status > i { width: 1px; height: 12px; background: #aaa; }
.status em { width: 7px; height: 7px; background: #56b13e; border: 1px solid #3f9a28; }
.status .g9 { margin-left: 6px; }
.status .near { margin-left: 3px; }
.status .g14 { margin-left: 11px; }
.status em + span { margin-left: -1px; }
.views { margin-left: auto; display: flex; align-self: stretch; }
.views button { width: 37px; display: flex; align-items: center; justify-content: center; }
.views button:last-child { width: 44px; gap: 3px; padding-left: 4px; }
.views .on { background: #c7d8ef; }
.views svg { width: 14px; height: 14px; }
.views + label { width: 38px; margin-left: 2px; font-size: 13px; }
#zoom { appearance: none; width: 134px; height: 14px; margin: 0 2px 0 4px; background: linear-gradient(90deg, #4a8de0 53%, #8b8b95 53%) center / 100% 2px no-repeat; }
#zoom::-webkit-slider-thumb { appearance: none; width: 14px; height: 14px; border: 1px solid #888; border-radius: 50%; background: #f2f2f2; }
.fit { margin-left: 3px; }

/* application menu, drawn over the window */
.menu { position: absolute; left: 0; top: 27px; width: 530px; display: flex; background: #d6d6d6; border: 1px solid #bdbdbd; box-shadow: 1px 1px 3px #8888; color: #111; }
.menu-main { width: 187px; padding: 2px 0; background: #f4f4f4; }
.mrow { width: 184px; height: 46px; padding-left: 18px; display: flex; align-items: center; text-align: left; }
.mrow svg { width: 20px; height: 20px; }
.mrow span { flex: 1; padding: 2px 0 0 13px; }
.mrow i { width: 20px; align-self: stretch; background: linear-gradient(#999, #999); clip-path: polygon(7px 19px, 11px 23px, 7px 27px); }
.mrow.on { background: linear-gradient(90deg, #dee9f9 164px, #b1cbeb 164px); }
.menu-main hr { height: 1px; margin: 1px 3px 1px 38px; border: 0; background: #e4e4e4; }
.menu-sub { flex: 1; margin: 0 6px 3px 0; background: #fff; box-shadow: 3px 2px 3px #a8a8a8; }
.menu-sub h2 { margin: 0 3px 1px 5px; padding: 16px 0 4px 10px; border-bottom: 1px solid #e8e8e8; font-size: 12px; line-height: 16px; color: #333; }
.srow { width: 100%; height: 46px; padding-left: 28px; display: flex; align-items: center; gap: 13px; text-align: left; }
.srow svg { width: 24px; height: 26px; }
.srow span { padding-top: 1px; }
.q { font: bold 14px "Noto Sans", sans-serif; fill: #fff; text-anchor: middle; }

/* callouts */
.mark { position: absolute; border: 3px solid #f93b3b; }
.m1 { left: 5px; top: 137px; width: 183px; height: 53px; }
.m2 { left: 199px; top: 264px; width: 322px; height: 63px; }
.arrow { position: absolute; left: 169px; top: 197px; }
```
